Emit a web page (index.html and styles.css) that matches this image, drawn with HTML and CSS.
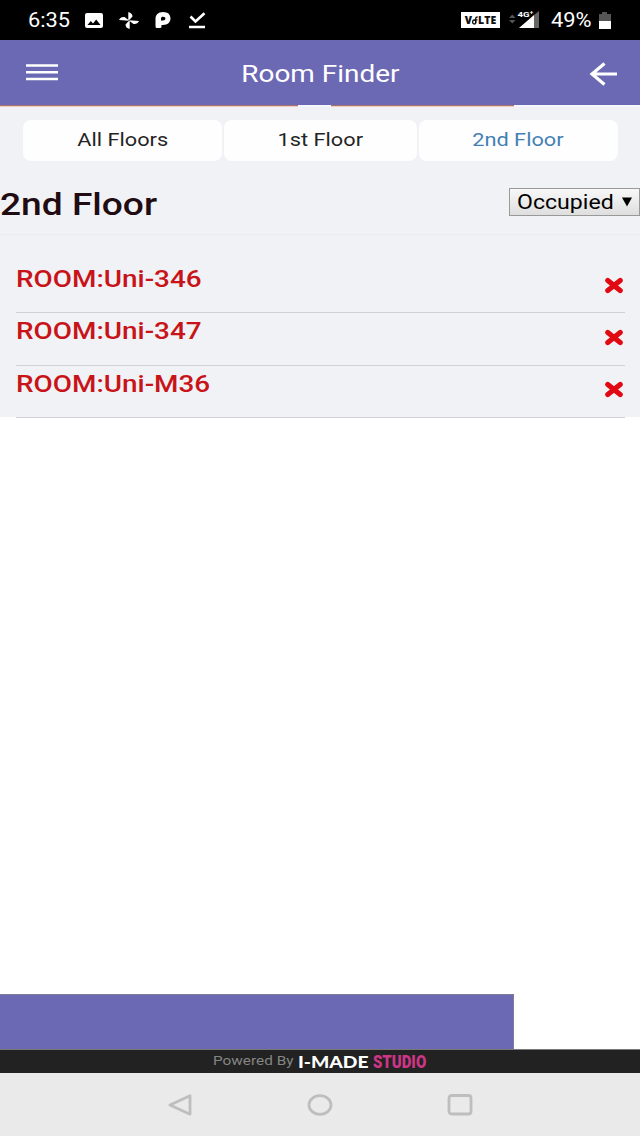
FILE: index.html
```html
<!DOCTYPE html>
<html lang="en">
<head>
<meta charset="utf-8">
<title>Room Finder</title>
<link rel="stylesheet" href="styles.css">
</head>
<body>
<div class="statusbar">
  <span class="clock wide">6:35</span>
  <svg class="icon-photo" width="18" height="15" viewBox="0 0 18 15"><path fill="#fff" fill-rule="evenodd" d="M2 0h14q2 0 2 2v11q0 2-2 2H2q-2 0-2-2V2Q0 0 2 0zM2.500 12h13l-4.300-5.500-3.200 4-2.200-2.500z"/></svg>
  <svg class="icon-fan" width="20" height="17" viewBox="0 0 20 17"><path fill="#fff" d="M9.300 0Q13.500 1 13.500 4.500L10.300 8H9.300zM20 9Q18.500 12.500 14.500 12L10.500 9V8.200zM10.700 17Q6.500 16 6.500 12.500L9.700 9h1zM0 8Q1.500 4.500 5.500 5L9.500 8V8.800z"/></svg>
  <svg class="icon-p" width="16" height="16" viewBox="0 0 16 16"><path fill="#fff" fill-rule="evenodd" d="M8 0c5 0 7.500 2.800 7.500 6.500S12.500 13 8 13H6.500v1.500Q6.500 16 5 16H2Q.5 16 .5 14.500V7C.5 3 3 0 8 0zM8 4.700C6.800 4.700 6 5.300 6 6.500V8.500h2c1.500 0 2.400-.7 2.400-1.900s-.9-1.900-2.400-1.900z"/></svg>
  <svg class="icon-done" width="17" height="17" viewBox="0 0 17 17" fill="none" stroke="#fff" stroke-width="2.600"><path d="M1.500 4.500l5 5L15.500 1.200M0 15h16"/></svg>
  <span class="volte"><b>V</b><svg width="6" height="9" viewBox="0 0 6 9" fill="none" stroke="#111" stroke-width="1.300"><ellipse cx="2.200" cy="6" rx="1.600" ry="2"/><path d="M3.700 7V2.500q0-1.500 2-1.500M2.500 3.800h3"/></svg><b>LTE</b></span>
  <svg class="icon-signal" width="31" height="20" viewBox="0 0 31 20"><path fill="#555" d="M0 9l3.300-3.500L6.500 9zM0 11l3.300 3.500L6.500 11z"/><path fill="#fff" d="M10 19L25 6v13z"/><path fill="#666" d="M25 6l5-4v17h-5z"/><text class="net" x="8.500" y="8" textLength="16" lengthAdjust="spacingAndGlyphs">4G⁺</text></svg>
  <span class="percent wide">49%</span>
  <svg class="icon-battery" width="12" height="17" viewBox="0 0 12 17"><path fill="#555" d="M0 2h3V0h5v2h4v7H0z"/><path fill="#fff" d="M0 9h12v8H0z"/></svg>
</div>
<header class="topbar">
  <svg class="menu" width="32" height="17" viewBox="0 0 32 17"><path stroke="#fff" stroke-width="2.600" d="M0 1.500h32M0 8.200h32M0 15h32"/></svg>
  <h1 class="title wide">Room Finder</h1>
  <svg class="back" width="29" height="24" viewBox="0 0 29 24" fill="none" stroke="#fff" stroke-width="3.200"><path d="M15.500 1.500L3 12l12.500 10.500M2 12h26"/></svg>
</header>
<div class="progress"><i class="bar first"></i><i class="bar second"></i></div>
<main class="content">
  <nav class="tabs">
    <a class="tab"><span class="wide">All Floors</span></a>
    <a class="tab"><span class="wide">1st Floor</span></a>
    <a class="tab active"><span class="wide">2nd Floor</span></a>
  </nav>
  <div class="heading">
    <h2 class="floor wide">2nd Floor</h2>
    <div class="select"><span class="wide">Occupied</span><svg width="10" height="10" viewBox="0 0 10 10"><path d="M0 .5h10L5 9.500z"/></svg></div>
  </div>
  <ul class="rooms">
    <li class="room"><span class="wide">ROOM:Uni-346</span><svg class="cross" viewBox="0 0 20 17"><path d="M3.800 3.500l12.400 10M16.200 3.500l-12.400 10"/></svg></li>
    <li class="room"><span class="wide">ROOM:Uni-347</span><svg class="cross" viewBox="0 0 20 17"><path d="M3.800 3.500l12.400 10M16.200 3.500l-12.400 10"/></svg></li>
    <li class="room"><span class="wide">ROOM:Uni-M36</span><svg class="cross" viewBox="0 0 20 17"><path d="M3.800 3.500l12.400 10M16.200 3.500l-12.400 10"/></svg></li>
  </ul>
</main>
<div class="banner"></div>
<footer class="credit"><span class="powered wide">Powered By</span><b class="made wide">I-MADE</b><b class="studio">STUDIO</b></footer>
<div class="navbar">
  <svg width="24" height="22" viewBox="0 0 24 22"><path d="M2 11L22 1.800v18.400z"/></svg>
  <svg width="26" height="22" viewBox="0 0 26 22"><ellipse cx="13" cy="11" rx="11" ry="9.300"/></svg>
  <svg width="26" height="22" viewBox="0 0 26 22"><rect x="2" y="1.500" width="22" height="18.500" rx="2.500"/></svg>
</div>
</body>
</html>
```
FILE: styles.css
```css
* { box-sizing: border-box; }
body {
  margin: 0;
  width: 640px;
  height: 1136px;
  display: flex;
  flex-direction: column;
  background: #fff;
  font-family: Roboto, sans-serif;
  overflow: hidden;
}
svg { display: block; flex: none; }
.wide { display: inline-block; white-space: nowrap; transform: scaleX(1.18); transform-origin: 0 50%; }
.statusbar { height: 40px; flex: none; display: flex; align-items: center; background: #000; color: #fff; font-size: 19.500px; padding-left: 28px; }
.clock { width: 57px; transform: scaleX(1.12); }
.icon-fan { margin-left: 16px; }
.icon-p { margin-left: 16px; }
.icon-done { margin-left: 18px; }
.volte { display: flex; align-items: center; justify-content: center; width: 39px; height: 16px; margin-left: 255px; background: #fff; color: #111; font: bold 10.500px "Open Sans", sans-serif; }
.icon-signal { margin-left: 9px; margin-top: -2px; }
.net { fill: #fff; font: bold 8px Roboto, sans-serif; }
.percent { width: 36px; margin-left: 11px; transform: scaleX(1.12); }
.icon-battery { margin-left: 12px; }
.topbar { height: 65px; flex: none; display: flex; align-items: center; justify-content: space-between; padding: 0 22px 0 26px; background: #6b68b4; color: #fff; }
.menu { margin-top: -1px; }
.title { margin: 2px 7px 0 0; font-size: 24.500px; font-weight: 400; transform: scaleX(1.14); transform-origin: 50% 50%; }
.back { margin-top: 3px; }
.progress { height: 2px; flex: none; display: flex; gap: 33px; background: #f6f7fd; }
.bar { height: 2px; background: linear-gradient(#a8746f 50%, #f0cdbd 50%); }
.first { width: 298px; }
.second { width: 183px; }
.content { flex: none; height: 310px; background: #f1f2f6; }
.tabs { display: grid; grid-template-columns: 199px 193px 199px; gap: 2px; padding: 13px 0 0 23px; }
.tab { height: 41px; display: flex; align-items: center; justify-content: center; background: #fefefe; border-radius: 8px; color: #242424; font-size: 19px; padding-bottom: 2px; }
.tab .wide { transform: scaleX(1.145); transform-origin: 50% 50%; }
.active { color: #4380b5; padding-right: 1px; }
.heading { display: flex; justify-content: space-between; height: 74px; padding-top: 27px; border-bottom: 1px solid #ebecf1; }
.floor { margin: -3px 0 0; color: #210c12; font-size: 32px; font-weight: 500; line-height: 38px; transform: scaleX(1.16); }
.select { display: flex; align-items: center; justify-content: space-between; width: 131px; height: 28px; padding: 0 7px 1px; border: 1px solid #999; background: linear-gradient(#f8f8f8, #dedede); color: #000; font-size: 20px; }
.select .wide { transform: scaleX(1.155); }
.rooms { margin: 0; padding: 26px 15px 0 16px; list-style: none; }
.room { display: flex; justify-content: space-between; height: 52.300px; border-bottom: 1px solid #d0d1d4; color: #c81418; font-size: 23.500px; font-weight: 500; line-height: 36px; }
.room .wide { transform: scaleX(1.187); }
.cross { width: 20px; height: 17px; margin: 15.500px 1px 0 0; fill: none; stroke: #e20a12; stroke-width: 5.200; stroke-linecap: round; }
.banner { width: 514px; height: 55px; margin-top: auto; flex: none; background: #6b68b4; border-top: 1px solid #7f7d9a; border-right: 1px solid #7f7d9a; }
.credit { height: 24px; flex: none; display: flex; align-items: center; padding-left: 213px; background: #222; border-top: 1px solid #777; white-space: nowrap; }
.powered { width: 85px; margin-top: -2px; color: #858585; font-size: 13px; }
.made { width: 75px; margin-top: -1px; color: #fff; font: 900 17.500px Lato, sans-serif; transform: scaleX(1.1); }
.studio { display: inline-block; margin-top: -1px; color: #cd3587; font: 900 18px Roboto, sans-serif; transform: scaleX(.83); transform-origin: 0 50%; }
.navbar { height: 63px; flex: none; display: flex; align-items: center; justify-content: space-between; padding: 0 167px 0 168px; background: #eaeaea; }
.navbar svg { fill: none; stroke: #bebebe; stroke-width: 2.800; stroke-linejoin: round; }
```
